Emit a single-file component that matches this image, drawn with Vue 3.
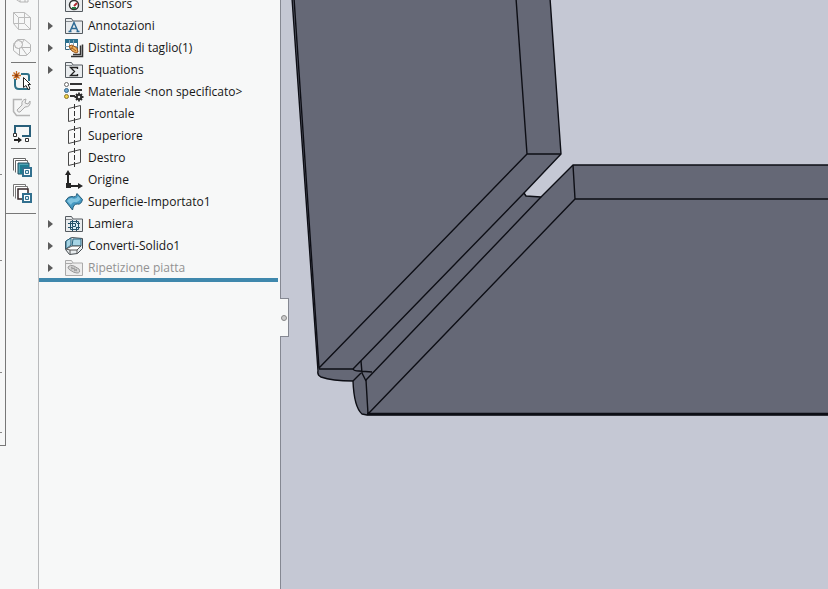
<script setup>
const tools = [
  { icon: 't-corner', label: 'View corner', dim: true },
  { icon: 't-cube', label: 'Wireframe view', dim: true },
  { icon: 't-hex', label: 'Section view', dim: true },
  { sep: true },
  { icon: 't-sketch', label: 'Select sketch' },
  { icon: 't-repair', label: 'Repair sketch', dim: true },
  { icon: 't-screen', label: 'Move view' },
  { sep: true },
  { icon: 't-stack', label: 'Show bodies' },
  { icon: 't-stack2', label: 'Hide bodies' },
]
const items = [
  { icon: 'i-sensor', label: 'Sensors' },
  { icon: 'i-note', label: 'Annotazioni', open: true },
  { icon: 'i-cut', label: 'Distinta di taglio(1)', open: true },
  { icon: 'i-equation', label: 'Equations', open: true },
  { icon: 'i-material', label: 'Materiale <non specificato>' },
  { icon: 'i-plane', label: 'Frontale' },
  { icon: 'i-plane', label: 'Superiore' },
  { icon: 'i-plane', label: 'Destro' },
  { icon: 'i-origin', label: 'Origine' },
  { icon: 'i-surface', label: 'Superficie-Importato1' },
  { icon: 'i-sheet', label: 'Lamiera', open: true },
  { icon: 'i-convert', label: 'Converti-Solido1', open: true },
  { icon: 'i-flat', label: 'Ripetizione piatta', open: true, off: true },
]
</script>

<template>
  <svg class="sprites" aria-hidden="true">
    <symbol id="t-corner" viewBox="0 0 20 20">
      <path d="M2 4v9l6 4h8V8M8 17v-7h8M13 10v7" fill="none" stroke="#b4b4b4" />
    </symbol>
    <symbol id="t-cube" viewBox="0 0 20 20">
      <path d="M1.500 1.500h11v11h-11zM6.500 6.500h12v12h-12zM1.500 1.500l5 5M12.500 1.500l6 5M1.500 12.500l5 6M12.500 12.500l6 6" fill="none" stroke="#bcbcbc" />
    </symbol>
    <symbol id="t-hex" viewBox="0 0 20 20">
      <path d="M5.500 2.500h7l6 5v7l-4 4h-7l-6-5v-6zM7.500 18.500v-8l-6-4M7.500 10.500h11M12.500 2.500l-3 4M10 11l5 7" fill="none" stroke="#b6b6b6" />
      <circle cx="6.500" cy="7.500" r="4" fill="#f4f4f4" stroke="#acacac" />
    </symbol>
    <symbol id="t-sketch" viewBox="0 0 20 20">
      <path d="M9 3h6q2 0 2 2v5M3 8v6q0 4 4 4h11" fill="none" stroke="#2f7188" stroke-width="2" />
      <path d="M4.500 0v9M0 4.500h9M1.500 1.500l6 6M7.500 1.500l-6 6" stroke="#c66b22" stroke-width="1.300" />
      <circle cx="4.500" cy="4.500" r="1.500" fill="#8a3d12" />
      <path d="M11.500 6.500v10l2.500-2 2 4 2-1-2-4h2.500z" fill="#fff" stroke="#222" />
    </symbol>
    <symbol id="t-repair" viewBox="0 0 20 20">
      <path d="M10 2.500H1.500v12l3 4H18" fill="none" stroke="#b4b4b4" stroke-width="1.500" />
      <path d="M5 13l5-5q-1-5 4-6l-1 4 3 1 2-3q1 6-5 6l-5 5q-2 1-3-2z" fill="#eee" stroke="#aaa" />
    </symbol>
    <symbol id="t-screen" viewBox="0 0 20 20">
      <path d="M3 10V3h15v10h-8" fill="none" stroke="#285f7a" stroke-width="2" />
      <path d="M1.500 10.500h3v3h-3zM13.500 15.500h3v3h-3z" fill="#fff" stroke="#333" />
      <path d="M2 16h4v-2l4 3-4 3v-2H2z" fill="#222" />
    </symbol>
    <symbol id="t-stack" viewBox="0 0 20 20">
      <path d="M1.500 13.500v-12h12v2M3.500 15.500v-12h12v2" fill="#fff" stroke="#666" />
      <path d="M6 6h11v11H6z" fill="#4fa3b5" stroke="#234d5c" />
      <path d="M8 8h9v9H8z" fill="#1d7d91" />
      <path d="M11 11h8v8h-8z" fill="#fff" stroke="#32708f" stroke-width="2" />
      <path d="M13.500 13.500h3v3h-3z" fill="#d9edf4" stroke="#32708f" />
    </symbol>
    <symbol id="t-stack2" viewBox="0 0 20 20">
      <path d="M1.500 13.500v-12h12v2M3.500 15.500v-12h12v2" fill="#fff" stroke="#777" />
      <path d="M6 6h10v10H6z" fill="#fff" stroke="#35272a" stroke-width="1.500" />
      <path d="M11 11h8v8h-8z" fill="#fff" stroke="#32708f" stroke-width="2" />
      <path d="M13.500 13.500h3v3h-3z" fill="#d9edf4" stroke="#32708f" />
    </symbol>
    <symbol id="folder" viewBox="0 0 20 20">
      <path d="M1.500 17.500v-15h6l1.500 2.500h9.500v12.500z" fill="#e9ecee" stroke="#555b60" />
      <path d="M2 5.500h6.500" stroke="#81878b" />
    </symbol>
    <symbol id="i-sensor" viewBox="0 0 20 20">
      <use href="#folder" />
      <circle cx="10" cy="11" r="4.500" fill="#fff" stroke="#333" stroke-width="1.500" />
      <path d="M10 12l3-3" stroke="#b22b33" stroke-width="2" />
      <path d="M8 14h4" stroke="#2a7d46" stroke-width="2" />
    </symbol>
    <symbol id="i-note" viewBox="0 0 20 20">
      <use href="#folder" />
      <path d="M6 15.500l4-9 4 9M7.500 12.500h5M4.500 15.500h3M12.500 15.500h3" fill="none" stroke="#2d6a94" stroke-width="1.500" />
    </symbol>
    <symbol id="i-cut" viewBox="0 0 20 20">
      <path d="M7 18.500h11.500v-12M9 16.500h7.500v-9" fill="none" stroke="#333" stroke-width="1.500" />
      <path d="M1.500 1.500h12v10h-12z" fill="#fff" stroke="#34637c" />
      <path d="M1 1h13v4H1z" fill="#2b718f" />
      <path d="M1.500 8.500h12M5.500 2v10M9.500 2v10" stroke="#86aabd" />
      <path d="M5 8l3-1 5 3 1 4-2 1-4-2-2-3z" fill="#f0b35c" stroke="#9a541c" />
      <path d="M8 10l4 3M9 8l-2 3" stroke="#a05c22" />
    </symbol>
    <symbol id="i-equation" viewBox="0 0 20 20">
      <use href="#folder" />
      <path d="M13.500 9V7.500h-7l4 4-4 4h7V14" fill="none" stroke="#222" stroke-width="1.300" />
    </symbol>
    <symbol id="i-material" viewBox="0 0 20 20">
      <path d="M6 2h12M6 8h12M6 14h5" stroke="#333" stroke-width="2" />
      <circle cx="2.500" cy="2.500" r="2" fill="#fff" stroke="#666" />
      <circle cx="2.500" cy="8.500" r="2" fill="#6ba5cf" stroke="#35688b" />
      <circle cx="2.500" cy="14.500" r="2" fill="#f0d349" stroke="#8b752c" />
      <path d="M15 10.500v9M10.500 15h9M12 12l6 6M18 12l-6 6" stroke="#2d2d2d" stroke-width="1.800" />
      <circle cx="15" cy="15" r="2.200" fill="#eee" stroke="#2d2d2d" stroke-width="2" />
    </symbol>
    <symbol id="i-plane" viewBox="0 0 20 20">
      <path d="M4.500 4.500v13l12-3v-13z" fill="#fafafa" stroke="#484848" />
      <path d="M10.500 0v19" stroke="#333" stroke-dasharray="5 2" />
    </symbol>
    <symbol id="i-origin" viewBox="0 0 20 20">
      <path d="M4 5v11h12" fill="none" stroke="#262626" stroke-width="2" />
      <path d="M4 0l3 5H1zM19 16l-5 3v-6z" fill="#262626" />
      <path d="M2 13h5v5H2z" fill="#262626" />
    </symbol>
    <symbol id="i-surface" viewBox="0 0 20 20">
      <path d="M1.500 9Q4 4 8 4.500q4 1.500 5-3l5.500 6Q17 13 13.500 12q-4-.5-5 6z" fill="#4598c1" stroke="#245c79" />
      <path d="M3 9q3-4 6-2.500 4 1 5-2.500l2.500 3q-2 4-5.500 3-3 0-4 3z" fill="#7fc3df" />
    </symbol>
    <symbol id="i-sheet" viewBox="0 0 20 20">
      <use href="#folder" />
      <path d="M6.500 7.500h8v8h-8z" fill="#d9eef5" stroke="#205069" />
      <path d="M8.500 6v4M12.500 6v3M8.500 13v4M12.500 13v4M4 9.500h4M4 13.500h4M13 9.500h3M13 13.500h3M8.500 9.500h3v3h-3z" fill="none" stroke="#205069" />
    </symbol>
    <symbol id="i-convert" viewBox="0 0 20 20">
      <path d="M1.500 5.500l6-4 11 1v10l-5 5-8 1-4-5z" fill="#e8edef" stroke="#444b50" />
      <path d="M2 5l5-3v7l-5 4zM9 3h8v7H8z" fill="#a6d4e4" stroke="#286580" />
      <path d="M2 13l6-3h9l-4 4H6zM6 18v-4M13 14v4" fill="#fff" stroke="#555" />
    </symbol>
    <symbol id="i-flat" viewBox="0 0 20 20">
      <path d="M1.500 17.500v-15h6l1.500 2.500h9.500v12.500zM2 5.500h6.500" fill="#eee" stroke="#aaa" />
      <path d="M4 9q2-3 6-1l5 3q2 4-2 4-3 0-7-3-2-1-2-3z" fill="#d3d3d3" stroke="#999" />
      <path d="M7 9l6 4M7 11l4-1M10 13l3-2" stroke="#999" />
    </symbol>
  </svg>

  <main class="workspace">
    <div class="ruler" aria-hidden="true"><i></i><i></i><i></i><i></i></div>
    <div class="tool-column">
      <div class="toolbar" role="toolbar">
        <template v-for="(tool, index) in tools" :key="index">
          <hr v-if="tool.sep" class="divider">
          <button v-else class="tool" type="button" :aria-label="tool.label" :disabled="tool.dim">
            <svg class="icon"><use :href="'#' + tool.icon" /></svg>
          </button>
        </template>
      </div>
    </div>

    <aside class="panel">
      <ul class="tree">
        <li v-for="item in items" :key="item.label" class="row" :class="{ off: item.off }">
          <button v-if="item.open" class="expander" type="button" :aria-label="item.label"></button>
          <span v-else class="expander-space"></span>
          <svg class="icon"><use :href="'#' + item.icon" /></svg>
          <span class="label">{{ item.label }}</span>
        </li>
      </ul>
      <div class="rollback"></div>
    </aside>

    <section class="viewport">
      <svg class="model" aria-hidden="true">
        <g transform="translate(-281 0)" stroke="#0d0e15" stroke-width="1.400" stroke-linejoin="round" fill="none">
          <path d="M292 -2L318 371Q317 375 321 377Q332 381 353 381Q354 407 362 414L367 415H4000V165H573L541 197L526 196L524 193L561 154L550 -2Z" fill="#656876" />
          <path d="M294 -2L319 368L527 154L516 -2M527 154H561M524 193L353 369H319M541 197L366 380L368 414L575 199H4000M573 165L575 199" />
          <path d="M353 369Q354 371 359 371L372 372M361 361L362 373L366 381M353 381L361 373" />
          <path d="M367 414H4000" stroke-width="2.500" />
        </g>
      </svg>
      <button class="collapse" type="button" aria-label="Collapse panel"></button>
    </section>
  </main>
</template>

<style>
body { margin: 0; overflow: hidden; }
</style>

<style scoped>
.sprites { position: absolute; width: 0; height: 0; }
.workspace {
  display: flex;
  height: 100vh;
  overflow: hidden;
  background: #f6f7f7;
  color: #161616;
  font: 12px/22px "Open Sans", "Noto Sans", sans-serif;
}
button { padding: 0; border: 0; background: none; }
.ruler {
  box-sizing: border-box;
  flex: 0 0 6px;
  height: 446px;
  border: solid #777;
  border-width: 0 1px 1px 0;
  display: grid;
  grid-template-rows: 175px 86px 112px 60px;
}
.ruler i { width: 2px; border-bottom: 1px solid #888; }
.tool-column { flex: 0 0 32px; border-right: 1px solid #b9babc; }
.toolbar {
  display: flex;
  flex-direction: column;
  width: 30px;
  margin-top: -18px;
  padding-bottom: 7px;
  border-bottom: 1px solid #777;
}
.tool { display: grid; place-items: center; height: 26px; width: 32px; }
.icon { width: 20px; height: 20px; flex: none; }
.divider { width: 25px; height: 1px; margin: 2px 0 5px 5px; border: 0; background: #777; }
.panel { flex: 0 0 241px; background: #f7f8f8; }
.tree { margin: -7px 0 0; padding: 0; list-style: none; }
.row { display: flex; align-items: center; height: 22px; white-space: nowrap; }
.expander, .expander-space { width: 9px; height: 8px; margin-right: 16px; flex: none; }
.expander {
  width: 5px;
  margin-left: 9px;
  margin-right: 11px;
  background: #5c5c5c;
  clip-path: polygon(0 0, 100% 50%, 0 100%);
}
.label { margin-left: 4px; }
.off .label { color: #929292; }
.rollback { height: 4px; margin: -1px 2px 0 0; background: #3f88ad; }
.viewport {
  position: relative;
  flex: 1;
  min-width: 0;
  border-left: 1px solid #858892;
  background: #c5c8d4;
}
.model { display: block; width: 100%; height: 100%; }
.collapse {
  position: absolute;
  top: 298px;
  left: -1px;
  box-sizing: border-box;
  width: 9px;
  height: 39px;
  border: solid #858892;
  border-width: 1px 1px 1px 0;
  background: #f7f8f8;
}
.collapse::before {
  content: "";
  display: block;
  box-sizing: border-box;
  width: 6px;
  height: 6px;
  margin-left: 1px;
  border: 1px solid #888;
  border-radius: 50%;
  background: #ccc;
}
</style>
